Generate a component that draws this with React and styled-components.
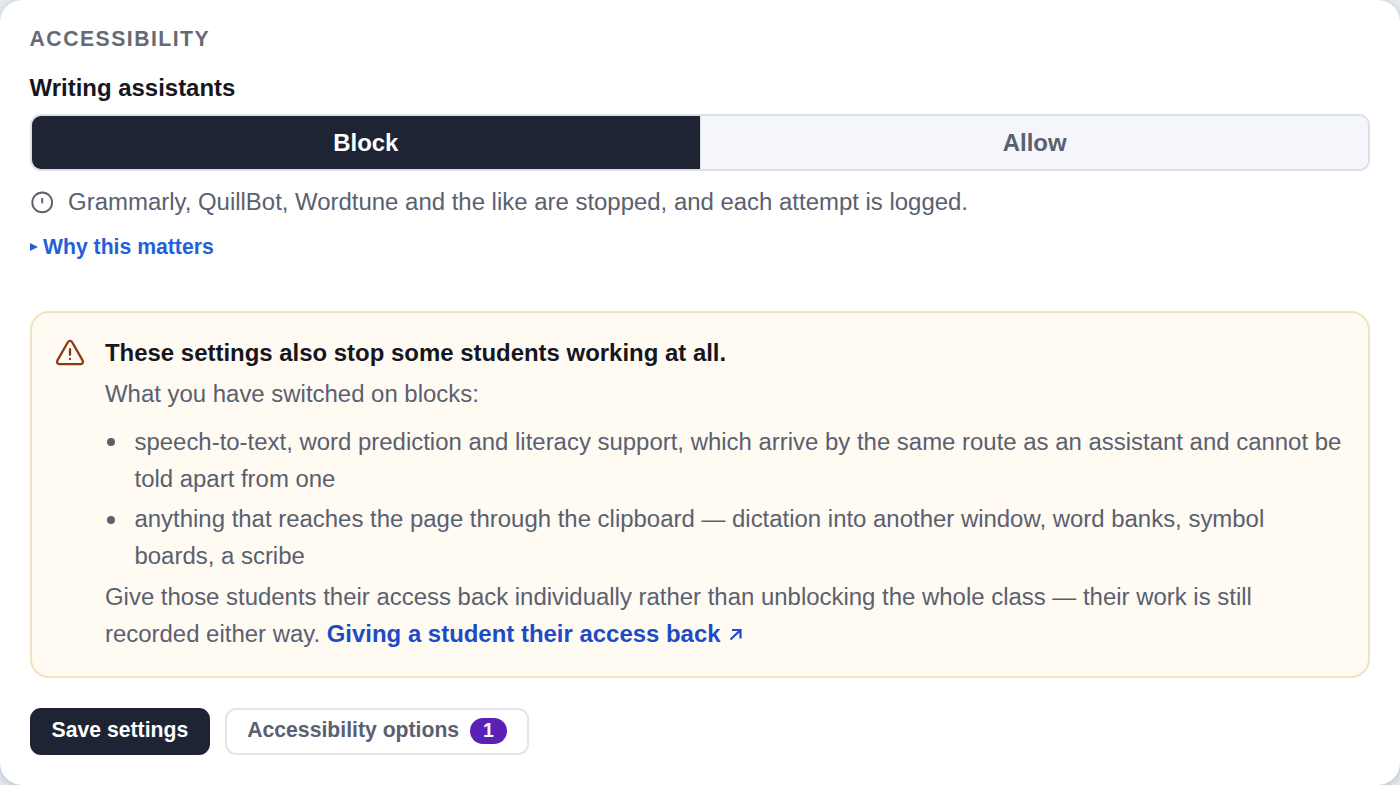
import { useState } from "react";
import styled, { createGlobalStyle } from "styled-components";

const GlobalStyle = createGlobalStyle`
    * {
        box-sizing: border-box;
    }

    body {
        margin: 0;
        background: #e3e8ee;
        font-family: "Liberation Sans", Arial, sans-serif;
        font-size: 23.95px;
        line-height: 36.9px;
        color: #5a6070;
    }

    button {
        font-family: inherit;
        cursor: pointer;
    }
`;

const Card = styled.main`
    height: 785px;
    padding: 23px 29.6px 0;
    background: #ffffff;
    border-radius: 22px;
    box-shadow: 0 2px 6px rgba(20, 30, 60, 0.2);
    overflow: hidden;
`;

const SectionTitle = styled.h2`
    margin: 0;
    font-size: 21.2px;
    line-height: 32px;
    font-weight: 700;
    letter-spacing: 1.48px;
    text-transform: uppercase;
    color: #666a75;
`;

const FieldLabel = styled.h3`
    margin: 14px 0 7.5px;
    font-size: 23.94px;
    line-height: 37px;
    font-weight: 700;
    color: #15161f;
`;

const Segments = styled.div`
    display: grid;
    grid-template-columns: 1fr 1fr;
    height: 57px;
    border: 2px solid #dce1e9;
    border-radius: 11px;
    overflow: hidden;
`;

const Segment = styled.button`
    padding: 1px 0 0;
    border: 0;
    border-left: ${props => props.$divided ? '1px solid #dce1e9' : '0'};
    font-size: 23.94px;
    font-weight: 700;
    background: ${props => props.$active ? '#1e2433' : '#f4f6fb'};
    color: ${props => props.$active ? '#ffffff' : '#5a6070'};
`;

const Hint = styled.p`
    display: flex;
    align-items: center;
    gap: 14px;
    margin: 13.5px 0 0;

    & > svg {
        flex: none;
        margin-left: 0.5px;
    }
`;

const WhyToggle = styled.button`
    display: flex;
    align-items: center;
    gap: 5.4px;
    margin: 9.2px 0 0;
    padding: 0;
    border: 0;
    background: none;
    font-size: 21.2px;
    line-height: 34px;
    font-weight: 700;
    color: #2360d8;
`;

const Notice = styled.section`
    display: flex;
    gap: 20px;
    height: 367px;
    margin-top: 47px;
    padding: 21.8px 22px 0 23.4px;
    border: 2px solid #f0e3c0;
    border-radius: 19px;
    background: #fffbf2;

    & > svg {
        flex: none;
        margin-top: 3.2px;
    }
`;

const NoticeTitle = styled.h4`
    margin: 0 0 4.2px;
    font-size: 23.94px;
    font-weight: 700;
    color: #15161f;
`;

const NoticeText = styled.p`
    margin: 0;
`;

const Blocked = styled.ul`
    margin: 11.1px 0 0;
    padding: 0;
    list-style: none;
`;

const BlockedItem = styled.li`
    display: flex;
    gap: 19.5px;
    margin-bottom: 3.6px;

    &::before {
        content: "";
        flex: none;
        width: 8px;
        height: 8px;
        margin: 14.5px 0 0 2px;
        border-radius: 50%;
        background: #5a6070;
    }
`;

const HelpLink = styled.a`
    font-weight: 700;
    color: #1d4bc8;
    text-decoration: none;

    & > svg {
        margin-left: 8.5px;
    }
`;

const Actions = styled.div`
    display: flex;
    gap: 15px;
    margin-top: 29.5px;
`;

const Button = styled.button`
    display: flex;
    align-items: center;
    height: 47.5px;
    padding: 0 20px 2.5px;
    border: 2px solid ${props => props.$primary ? '#1e2433' : '#e4e5ea'};
    border-radius: 11px;
    background: ${props => props.$primary ? '#1e2433' : '#ffffff'};
    font-size: 21.2px;
    font-weight: 700;
    color: ${props => props.$primary ? '#ffffff' : '#5a6070'};
`;

const Count = styled.span`
    width: 36.6px;
    height: 26px;
    margin: 2.5px 0 0 11px;
    border-radius: 13px;
    background: #5b21b6;
    font-size: 19.4px;
    line-height: 25px;
    text-align: center;
    color: #ffffff;
`;

const blocked = [
    'speech-to-text, word prediction and literacy support, which arrive by the same route as an assistant and cannot be told apart from one',
    'anything that reaches the page through the clipboard — dictation into another window, word banks, symbol boards, a scribe',
];

function ClockIcon () {
    return (
        <svg width="24" height="24" viewBox="0 0 24 24" fill="none" stroke="#5a6070" strokeWidth="1.9">
            <circle cx="12.2" cy="12.4" r="9.9" />
            <path d="M12.2 8v5.2" />
        </svg>
    );
}

function WarningIcon () {
    return (
        <svg width="30" height="30" viewBox="0 0 30 30" fill="none" stroke="#8a3b12" strokeWidth="2.3" strokeLinecap="round" strokeLinejoin="round">
            <path d="M12.8 4.2 2.3 22.6a2.3 2.3 0 0 0 2 3.5h21.4a2.3 2.3 0 0 0 2-3.5L17.2 4.2a2.5 2.5 0 0 0-4.4 0z" />
            <path d="M15 11.2v5.6M15 20.9v.2" />
        </svg>
    );
}

function App () {
    const [mode, setMode] = useState('Block');

    return (
        <>
            <GlobalStyle />
            <Card>
                <SectionTitle>Accessibility</SectionTitle>
                <FieldLabel>Writing assistants</FieldLabel>
                <Segments>
                    { ['Block', 'Allow'].map((name, idx) => (
                        <Segment key={ name }
                            $active={ mode === name }
                            $divided={ idx > 0 }
                            onClick={() => setMode(name)}>
                            { name }
                        </Segment>
                    )) }
                </Segments>
                <Hint>
                    <ClockIcon />
                    Grammarly, QuillBot, Wordtune and the like are stopped, and each attempt is logged.
                </Hint>
                <WhyToggle>
                    <svg width="8" height="8" viewBox="0 0 8 8" fill="#2360d8"><path d="M0 0 8 4 0 8z" /></svg>
                    Why this matters
                </WhyToggle>

                <Notice>
                    <WarningIcon />
                    <div>
                        <NoticeTitle>These settings also stop some students working at all.</NoticeTitle>
                        <NoticeText>What you have switched on blocks:</NoticeText>
                        <Blocked>
                            { blocked.map((text) => <BlockedItem key={ text }><span>{ text }</span></BlockedItem>) }
                        </Blocked>
                        <NoticeText>
                            Give those students their access back individually rather than unblocking the whole class — their work is still recorded either way.{' '}
                            <HelpLink href="#access">
                                Giving a student their access back
                                <svg width="13" height="14" viewBox="0 0 13 14" fill="none" stroke="#1d4bc8" strokeWidth="2.2">
                                    <path d="M1.5 11.5 11 2.5M3 2h8.5v8.5" />
                                </svg>
                            </HelpLink>
                        </NoticeText>
                    </div>
                </Notice>

                <Actions>
                    <Button $primary>Save settings</Button>
                    <Button>Accessibility options<Count>1</Count></Button>
                </Actions>
            </Card>
        </>
    );
}

export default App;
